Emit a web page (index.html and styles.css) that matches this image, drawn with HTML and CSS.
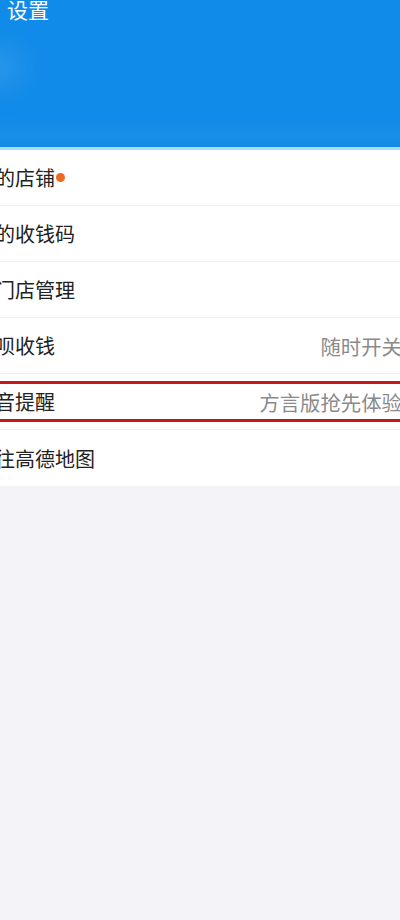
FILE: index.html
```html
<!DOCTYPE html>
<html lang="zh-CN">
<head>
    <meta charset="UTF-8">
    <meta name="viewport" content="width=device-width, initial-scale=1.0">
    <title>设置</title>
    <link rel="stylesheet" href="styles.css">
</head>
<body>
    <div class="header">
        <h1 class="title">设置</h1>
        <div class="blur"></div>
    </div>
    <ul class="menu">
        <li class="item">
            <span class="label">我的店铺<span class="dot"></span></span>
        </li>
        <li class="item">
            <span class="label">我的收钱码</span>
        </li>
        <li class="item">
            <span class="label">多门店管理</span>
        </li>
        <li class="item">
            <span class="label">花呗收钱</span>
            <span class="extra">随时开关</span>
        </li>
        <li class="item marked">
            <span class="label">语音提醒</span>
            <span class="extra">方言版抢先体验</span>
            <div class="highlight"></div>
        </li>
        <li class="item">
            <span class="label">前往高德地图</span>
        </li>
    </ul>
</body>
</html>
```

FILE: styles.css
```css
html, body {
    overflow-x: hidden;
}

body {
    margin: 0;
    background: #f3f3f8;
    font-family: "Noto Sans CJK SC", "Noto Sans", sans-serif;
    height: 920px;
}

.header {
    position: relative;
    height: 147px;
    background: linear-gradient(180deg, #118be9 0%, #118be9 80%, #1890e8 92%, #128ae6 100%);
    border-bottom: 3px solid #a6def6;
    overflow: hidden;
}

.title {
    margin: 0;
    padding: 0 0 0 7px;
    font-size: 21px;
    font-weight: normal;
    line-height: 22px;
    color: #fff;
    position: relative;
    top: -2px;
}

.blur {
    position: absolute;
    left: -30px;
    top: 45px;
    width: 55px;
    height: 45px;
    border-radius: 50%;
    background: rgba(120, 190, 240, 0.2);
    filter: blur(12px);
}

.menu {
    list-style: none;
    margin: 0 -2px 0 -41px;
    padding: 0;
    background: #fff;
}

.item {
    position: relative;
    display: flex;
    align-items: center;
    justify-content: space-between;
    height: 55px;
    padding: 0 0 0 16px;
    border-bottom: 1px solid #efefef;
    font-size: 20px;
    color: #222;
}

.item:last-child {
    border-bottom: none;
    height: 56px;
}

.label {
    display: flex;
    align-items: center;
}

.dot {
    width: 9px;
    height: 9px;
    margin-left: 1px;
    border-radius: 50%;
    background: #ef6a1f;
}

.extra {
    color: #8a8a8a;
    font-size: 20.4px;
}

.highlight {
    position: absolute;
    left: -10px;
    right: -10px;
    top: 7px;
    height: 35px;
    border: 3px solid #c8161d;
}
```
